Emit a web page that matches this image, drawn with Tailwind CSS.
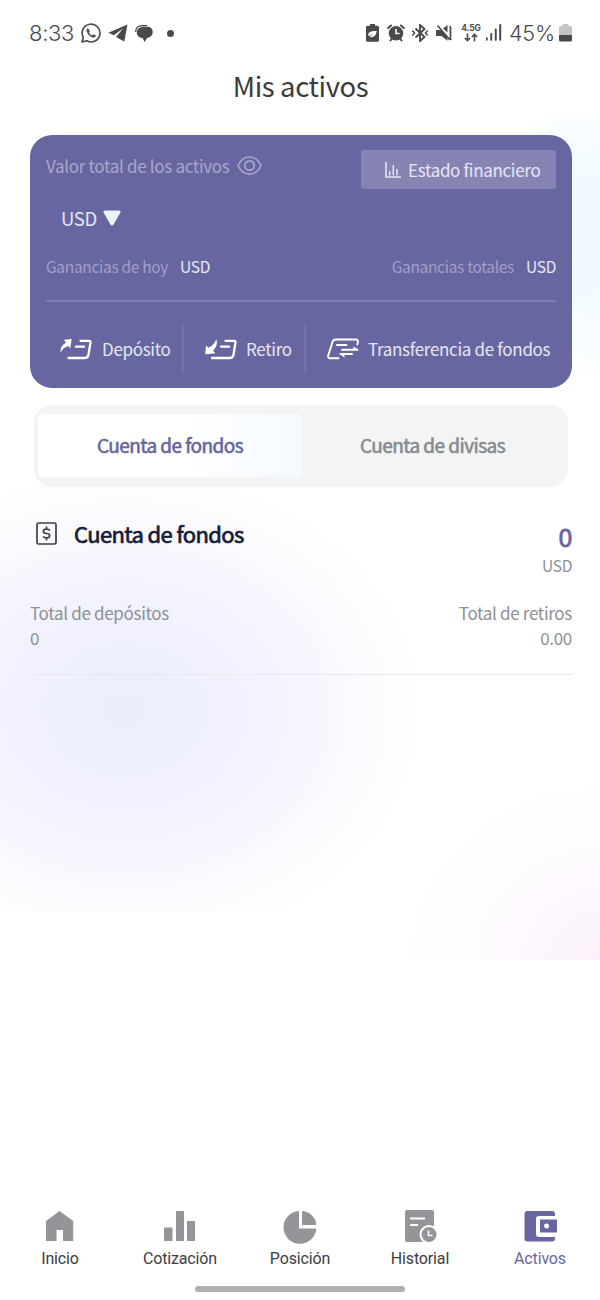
<!DOCTYPE html>
<html lang="es">
<head>
  <meta charset="UTF-8" />
  <meta name="viewport" content="width=device-width, initial-scale=1" />
  <title>Mis activos</title>
  <script src="https://cdn.jsdelivr.net/npm/@tailwindcss/browser@4"></script>
</head>
<body class="bg-white font-['Noto_Sans_CJK_SC',sans-serif] tracking-[-0.32px]">

  <div class="relative isolate flex flex-col w-[600px] h-[1300px] overflow-hidden">

    <!-- Background glows -->
    <div class="absolute -z-10 left-0 top-[440px] w-[450px] h-[472px] bg-[radial-gradient(ellipse_305px_245px_at_125px_270px,#eceefc_0%,#f0f1fd_35%,#f5f6fe_60%,#fcfcff_82%,#ffffff_100%)]"></div>
    <div class="absolute -z-10 right-0 top-[118px] w-[120px] h-[270px] bg-[radial-gradient(ellipse_120px_155px_at_120px_115px,#eff9ff_0%,#f4fbff_50%,#ffffff_100%)]"></div>
    <div class="absolute -z-10 right-0 top-[760px] w-[220px] h-[200px] bg-[radial-gradient(ellipse_210px_190px_at_220px_200px,#fbf1fc_0%,#fdf7fe_35%,#fefdff_65%,#ffffff00_100%)]"></div>

    <!-- Status bar -->
    <header class="flex items-center justify-between h-[66px] pl-[29px] pr-7 text-[#4a4a4a] font-['Inter',sans-serif]">
      <div class="flex items-center">
        <span class="w-[52px] text-[22px] font-light tracking-[-0.3px] whitespace-nowrap">8:33</span>
        <svg class="w-5 h-5" viewBox="0 0 20 20" fill="none">
          <path d="M1 19l1.3-4.6A8.9 8.9 0 1 1 5.700 17.800z" stroke="currentColor" stroke-width="1.7" stroke-linejoin="round" />
          <path d="M7 5.200c-1.600.6-1.900 2.200-1 4 1.200 2.500 3 4.300 5.400 5.200 1.700.6 3.200-.1 3.500-1.900l-2.400-1.300-1.300 1.300c-1.400-.5-2.600-1.700-3.200-3.100l1-1.300z" fill="currentColor" />
        </svg>
        <svg class="w-5 h-[18px] ml-[7px]" viewBox="0 0 20 18" fill="currentColor">
          <path d="M19.500.5L.3 8.800l5.500 2.400L15 4.500 8 13l8.300 4.500z" />
        </svg>
        <svg class="w-[18px] h-[17px] ml-[7px]" viewBox="0 0 18 17" fill="currentColor">
          <path d="M.8 7C.3 3 3.200.6 7.200.6h5" fill="none" stroke="currentColor" stroke-width="1.200" />
          <path d="M8.500 1.800h3.800c3 0 5.400 1.900 5.400 5.100 0 3.400-2.400 5.600-5.400 5.900L9.500 16.900 7.600 13C4.300 12.800 1.800 10.600 1.800 7.400c0-3.400 3.200-5.600 6.700-5.600z" />
        </svg>
        <span class="w-[7px] h-[7px] ml-[14px] rounded-full bg-[#4a4a4a]"></span>
      </div>
      <div class="flex items-center">
        <svg class="w-[13px] h-[18px]" viewBox="0 0 13 18" fill="currentColor">
          <path fill-rule="evenodd" d="M4 0h5v1.800h2.500A1.500 1.500 0 0 1 13 3.300v13a1.500 1.500 0 0 1-1.500 1.500h-10A1.500 1.500 0 0 1 0 16.300v-13a1.500 1.500 0 0 1 1.500-1.500H4zM10.800 7C6 6.600 2.300 7.800 2.300 10.500c0 .8.300 1.400.9 1.800l3.800-2.600-3.200 3.200c3.300 1.100 6.200-.9 7-5.900z" />
        </svg>
        <svg class="w-[18px] h-[18px] ml-[8px]" viewBox="0 0 18 18">
          <g stroke="currentColor" stroke-width="2" fill="none" stroke-linecap="round">
            <path d="M1.200 4L4 1.500M16.800 4L14 1.500M3.500 16.500l1.500-2M14.500 16.500l-1.500-2" />
          </g>
          <circle cx="9" cy="9.300" r="7.200" fill="currentColor" />
          <path d="M9 5v4.500h3.500" stroke="white" stroke-width="1.600" fill="none" />
        </svg>
        <svg class="w-4 h-[18px] ml-[7px]" viewBox="0 0 16 18" fill="none" stroke="currentColor" stroke-width="1.900">
          <path d="M3.500 4.500l9 8.500L8 17V1l4.500 4-9 8.500" />
          <path d="M.3 6.500L2.500 9 .3 11.500M15.700 6.500L13.500 9l2.200 2.500" stroke-width="1.500" />
        </svg>
        <svg class="w-[18px] h-[18px] ml-[8px]" viewBox="0 0 18 18" fill="currentColor">
          <path d="M0 6h4l1 .2L11.500 12v4.800L5.500 12H0zM7 4.500L11.500 1v7.500z" />
          <path d="M1.500 1.500L14 16" stroke="currentColor" stroke-width="1.600" />
          <path d="M14.500 2c-1.500 1.400 1.500 2.100 0 3.500s1.500 2.100 0 3.500 1.500 2.100 0 3.500 1.500 2.100 0 3.500" fill="none" stroke="currentColor" stroke-width="1.700" />
        </svg>
        <div class="flex flex-col items-center w-5 ml-[7px]">
          <span class="text-[8.500px] leading-[9px] font-bold tracking-[-0.2px]">4.5G</span>
          <svg class="w-[14px] h-[9px]" viewBox="0 0 14 9" fill="none" stroke="currentColor" stroke-width="1.600">
            <path d="M3.500 .5v7M.8 5L3.500 7.700 6.200 5M10.500 8.500v-7M7.800 4l2.700-2.700L13.200 4" />
          </svg>
        </div>
        <svg class="w-4 h-[18px] ml-[5px]" viewBox="0 0 16 18" fill="currentColor">
          <rect x="0" y="13" width="1.700" height="3.700" rx=".8" />
          <rect x="4.300" y="9" width="1.900" height="7.700" rx=".8" />
          <rect x="8.800" y="4.500" width="1.900" height="12.200" rx=".8" />
          <rect x="13.200" y="0" width="2" height="16.700" rx=".8" />
        </svg>
        <span class="w-[47px] ml-[7px] text-[21.500px] font-light tracking-[-0.2px] whitespace-nowrap">45%</span>
        <svg class="w-[13px] h-[18px] ml-[3px]" viewBox="0 0 12 18" preserveAspectRatio="none">
          <path d="M3.500 0h5v2H10.500A1.500 1.500 0 0 1 12 3.500V11H0V3.500A1.500 1.500 0 0 1 1.500 2h2z" fill="#c4c4c4" />
          <path d="M0 11h12v5a1.500 1.500 0 0 1-1.500 1.500h-9A1.500 1.500 0 0 1 0 16z" fill="currentColor" />
        </svg>
      </div>
    </header>

    <h1 class="h-[69px] text-center text-[27.500px] leading-[39px] tracking-[-0.4px] text-[#3c3c3c] pl-[1px]">Mis activos</h1>

    <!-- Summary card -->
    <section class="h-[253px] ml-[30px] mr-[28px] px-4 rounded-[22px] bg-[#6866a0] text-[#e6e6f5]">
      <div class="flex justify-between pt-[15px]">
        <div class="flex items-center h-[31px] text-[17px] text-[#a9a8cc]">
          <span>Valor total de los activos</span>
          <svg class="w-[25px] h-[19px] ml-2" viewBox="0 0 25 19" fill="none" stroke="currentColor" stroke-width="1.700">
            <path d="M1 9.500C3.500 4 7.500 1 12.500 1S21.500 4 24 9.500C21.500 15 17.500 18 12.500 18S3.500 15 1 9.500z" />
            <circle cx="12.500" cy="9.500" r="4.700" />
          </svg>
        </div>
        <button class="flex items-center w-[195px] h-[39px] pl-6 rounded-[3px] bg-[#8684b3] text-[17px] tracking-[-0.32px] whitespace-nowrap">
          <svg class="w-4 h-4 mr-[7px]" viewBox="0 0 16 16" fill="none" stroke="currentColor" stroke-width="1.500">
            <path d="M1 0v15h15M4.700 13.500V9M8.300 13.500V3M12 13.500V7" />
          </svg>
          Estado financiero
        </button>
      </div>
      <div class="flex items-center h-[59px] pl-[15px] text-[18.500px]">
        <span>USD</span>
        <svg class="w-[18px] h-[16px] ml-[6px] mb-[2px]" viewBox="0 0 18 16" fill="#e9f3f9">
          <path d="M2 .5h14a1.500 1.500 0 0 1 1.300 2.300L10.600 14.500a1.900 1.900 0 0 1-3.200 0L.7 2.800A1.500 1.500 0 0 1 2 .5z" />
        </svg>
      </div>
      <div class="flex justify-between h-[54px] pt-[5px] text-[15.500px] leading-[27px] border-b-2 border-[#7e7cb0]">
        <p><span class="text-[#a09fc8] mr-[12px]">Ganancias de hoy</span>USD</p>
        <p><span class="text-[#a09fc8] mr-[12px]">Ganancias totales</span>USD</p>
      </div>
      <div class="flex items-center h-12 mt-[23px] text-[17px] whitespace-nowrap">
        <div class="flex items-center w-[138px] h-full pl-[14px] border-r-2 border-[#7371a8]">
          <svg class="w-8 h-[21px] mr-[10px]" viewBox="0 0 32 21" fill="none" stroke="#ffffff" stroke-width="2.300" stroke-linecap="round" stroke-linejoin="round">
            <path d="M11.700 0L4 .8l2 3C2.500 5.500.5 8 .4 13.800 2.500 10 5 8 8.300 7l1.900 2.500z" fill="#ffffff" stroke="none" />
            <path d="M16 7.700h8M20.500 1.800h8.700a1.300 1.300 0 0 1 1.300 1.600l-2 12.300a4 4 0 0 1-4 3.300H8.500" />
          </svg>
          Depósito
        </div>
        <div class="flex items-center w-[122px] h-full pl-[21px] border-r-2 border-[#7371a8]">
          <svg class="w-8 h-[21px] mr-[9px]" viewBox="0 0 32 21" fill="none" stroke="#ffffff" stroke-width="2.300" stroke-linecap="round" stroke-linejoin="round">
            <path d="M.2 15.200L1 6.500l2.600 2.300C7.500 7 9.500 4.500 11.300.3c1.400 4 .2 8.200-3.300 11.500l2.500 2.400z" fill="#ffffff" stroke="none" />
            <path d="M16 7.700h8M20.500 1.800h8.700a1.300 1.300 0 0 1 1.300 1.600l-2 12.300a4 4 0 0 1-4 3.300H7" />
          </svg>
          Retiro
        </div>
        <div class="flex items-center h-full pl-[21px]">
          <svg class="w-8 h-[22px] mr-[9px]" viewBox="0 0 32 22" fill="none" stroke="#ffffff" stroke-width="1.900" stroke-linecap="round" stroke-linejoin="round">
            <path d="M11.500 20.300H3a2 2 0 0 1-1.900-2.600L5.500 4A3.500 3.500 0 0 1 9 1.500h20a2 2 0 0 1 1.900 2.600l-.6 2.400M10 7h9.500M15 11.800h15.500M25 16H13.500" />
            <path d="M26.500 8.500l5 3.300h-5zM17.500 19.500l-5-3.500h5z" fill="#ffffff" stroke="none" />
          </svg>
          Transferencia de fondos
        </div>
      </div>
    </section>

    <!-- Account tabs -->
    <nav class="flex h-[82px] mt-[17px] ml-[34px] mr-[32px] pl-1 pt-[9px] pb-[10px] rounded-[18px] bg-[#f4f4f4] text-[19px] tracking-[-0.55px]">
      <a class="flex items-center justify-center w-[264px] rounded-[3px] bg-linear-to-r from-white from-55% to-[#f4faff] text-[#6866a0] [-webkit-text-stroke:0.6px]">Cuenta de fondos</a>
      <a class="flex items-center justify-center flex-1 pr-[5px] text-[#858c91] [-webkit-text-stroke:0.6px]">Cuenta de divisas</a>
    </nav>

    <!-- Account details -->
    <section class="ml-[30px] mr-[28px] border-b border-[#e8e8ec] text-[#8c9094]">
      <div class="flex justify-between h-[112px] pt-[29px]">
        <div class="flex items-center h-[34px] pl-[6px] text-[22px] tracking-[-0.62px] text-[#171b36] [-webkit-text-stroke:0.7px]">
          <svg class="w-[21px] h-[23px] mr-[17px]" viewBox="0 0 21 23" fill="none" stroke="#3f3f46" stroke-width="1.700">
            <rect x="1" y="1" width="19" height="21" rx="1.500" />
            <path d="M14 8.500c-.8-1-1.900-1.300-3.500-1.300-4.200 0-4.200 4.300 0 4.300s4.200 4.300 0 4.300c-1.600 0-2.700-.4-3.500-1.300M10.500 4.500v2.500M10.500 16v2.500" />
          </svg>
          Cuenta de fondos
        </div>
        <div class="flex flex-col items-end pt-1">
          <span class="text-[25px] leading-[32px] text-[#6866a0] [-webkit-text-stroke:0.8px]">0</span>
          <span class="text-[15.500px] leading-[26px]">USD</span>
        </div>
      </div>
      <div class="flex justify-between h-[75px] pt-[1px] text-[17px] leading-[25px]">
        <div>
          <p>Total de depósitos</p>
          <p>0</p>
        </div>
        <div class="text-right">
          <p>Total de retiros</p>
          <p>0.00</p>
        </div>
      </div>
    </section>

    <!-- Bottom navigation -->
    <footer class="mt-auto h-[93px] font-['Roboto',sans-serif] text-[16px] leading-5 tracking-[-0.15px] text-[#3d3d3f]">
      <div class="grid grid-cols-5 text-center">
        <a class="flex flex-col items-center">
          <svg class="w-[34px] h-[38px] mb-[4px]" viewBox="0 0 34 38" fill="#949599"><path d="M16.500 4l13.700 10v20H20v-11h-6.500v11H3V14z" /></svg>
          Inicio
        </a>
        <a class="flex flex-col items-center">
          <svg class="w-[34px] h-[38px] mb-[4px]" viewBox="0 0 34 38" fill="#949599"><path d="M1 20.500h8.500V34H1zM13 4h8v30h-8zM24 14h8v20h-8z" /></svg>
          Cotización
        </a>
        <a class="flex flex-col items-center">
          <svg class="w-[34px] h-[38px] mb-[4px]" viewBox="0 0 34 38" fill="#949599"><path d="M16 4v17.500H33.300A16.400 16.400 0 1 1 16 4zM19 4a15 15 0 0 1 14.300 14H19z" /></svg>
          Posición
        </a>
        <a class="flex flex-col items-center">
          <svg class="w-[34px] h-[38px] mb-[4px]" viewBox="0 0 34 38" fill="#949599">
            <path d="M4 3h25a2 2 0 0 1 2 2v28a2 2 0 0 1-2 2H4a2 2 0 0 1-2-2V5a2 2 0 0 1 2-2z" />
            <path d="M7 11.500h15M7 18h8" stroke="#ffffff" stroke-width="2" />
            <circle cx="26" cy="27.500" r="8.500" stroke="#ffffff" stroke-width="2" />
            <path d="M25.500 23.500v5h4" fill="none" stroke="#ffffff" stroke-width="1.700" />
          </svg>
          Historial
        </a>
        <a class="flex flex-col items-center text-[#6866a0]">
          <svg class="w-[34px] h-[38px] mb-[4px]" viewBox="0 0 34 38" fill="currentColor">
            <path d="M4.500 4h24.500a3 3 0 0 1 3 3v2H16a3 3 0 0 0-3 3v15a3 3 0 0 0 3 3h16v1.500a3 3 0 0 1-3 3H4.500a3 3 0 0 1-3-3V7a3 3 0 0 1 3-3z" />
            <path fill-rule="evenodd" d="M17 12.500h17v13H17zM23.500 16.500a2.500 2.500 0 1 0 .1 5 2.500 2.500 0 0 0-.1-5z" />
          </svg>
          Activos
        </a>
      </div>
      <div class="w-[210px] h-[6px] mx-auto mt-[17px] rounded-full bg-[#b0b0b0]"></div>
    </footer>
  </div>

</body>
</html>
